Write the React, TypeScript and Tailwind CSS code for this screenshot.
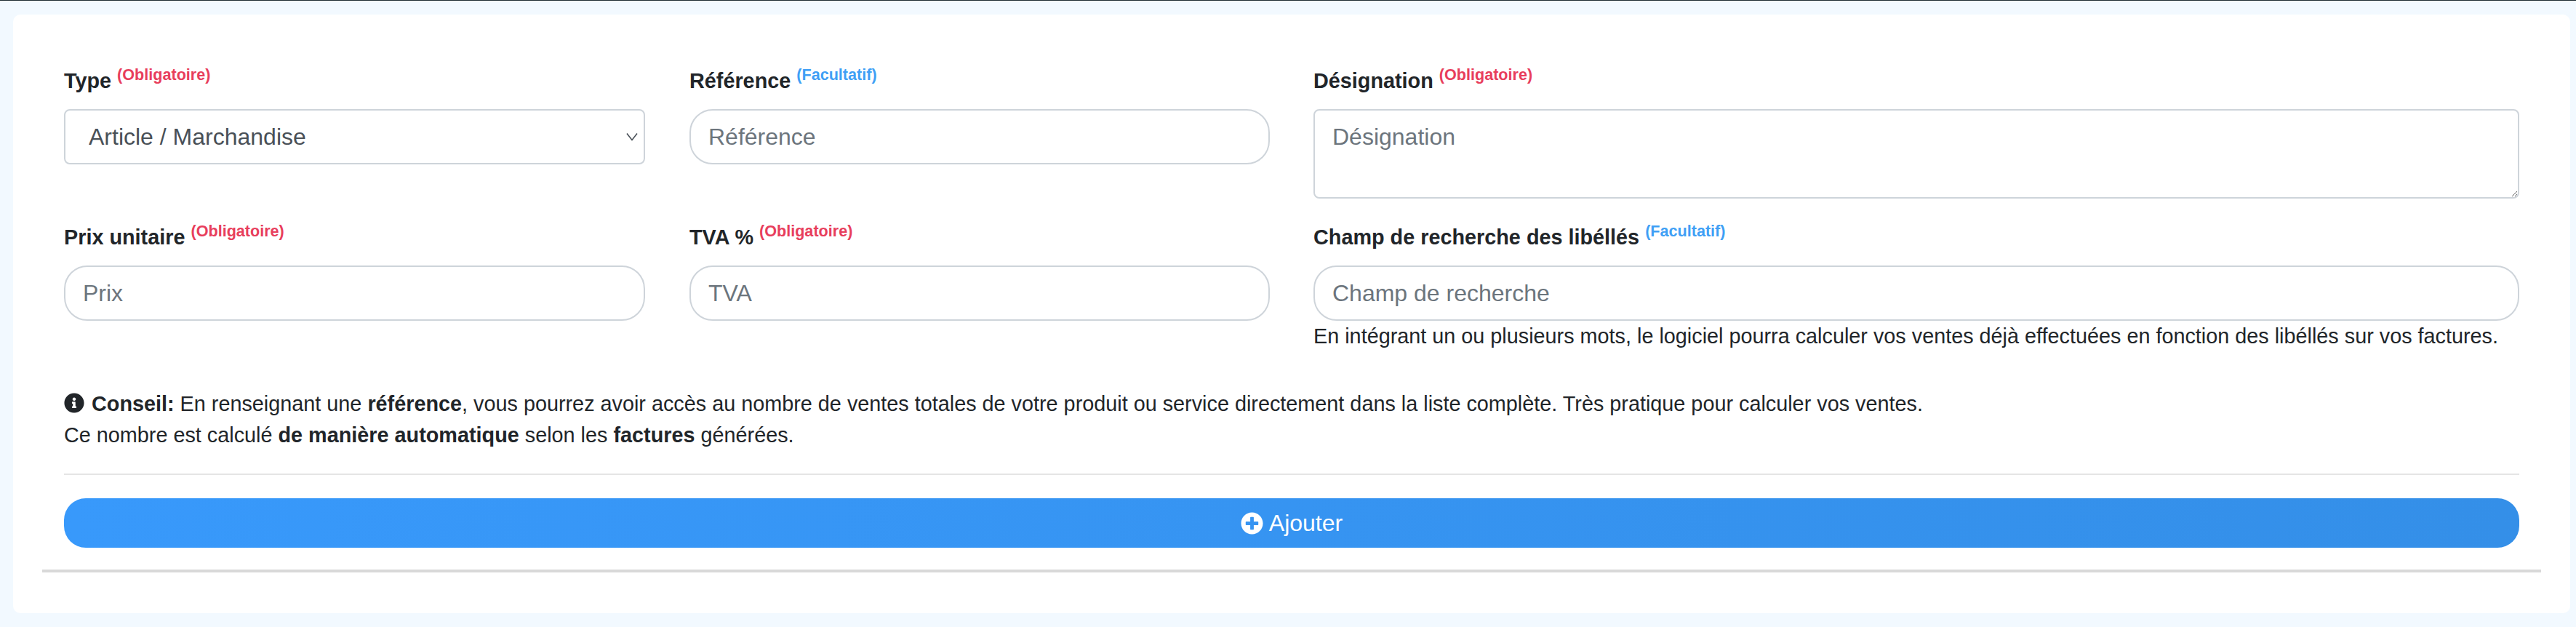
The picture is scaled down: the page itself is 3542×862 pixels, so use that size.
import { FaInfoCircle, FaPlusCircle } from 'react-icons/fa'

function Req() {
  return <sup className="text-[21.6px] font-bold text-[#e83e5c]">(Obligatoire)</sup>
}

function Opt() {
  return <sup className="text-[21.6px] font-bold text-[#3f9ff5]">(Facultatif)</sup>
}

const inputCls =
  'block h-[76px] w-full rounded-[32px] border-2 border-[#ced4da] bg-white px-[24px] text-[32px] text-[#495057] placeholder:text-[#6c757d] outline-none'

export default function App() {
  return (
    <div className="h-[862px] w-[3542px] overflow-hidden border-t border-[#1f2d33] bg-[#f2f9ff] pt-[19px] pl-[18px] font-['Liberation_Sans',Arial,sans-serif] text-[28.8px] leading-[43px] text-[#212529]">
      <div className="h-[823px] w-[3516px] rounded-[10px] bg-white px-[40px] pt-[70px]">
        <div className="px-[30px]">
          <div className="grid grid-cols-[860px_858px_1658px] gap-y-[32px]">
            <div className="pr-[61px]">
              <label className="mb-[17px] block font-bold">
                Type <Req />
              </label>
              <div className="relative">
                <select className="block h-[76px] w-full appearance-none rounded-[8px] border-2 border-[#ced4da] bg-white px-[32px] text-[32px] text-[#495057] outline-none">
                  <option>Article / Marchandise</option>
                </select>
                <svg className="absolute top-[32px] right-[10px] h-[12px] w-[16px]" viewBox="0 0 16 12" fill="none" stroke="#495057" strokeWidth="1.6">
                  <path d="M1 1.5 8 10.5 15 1.5" />
                </svg>
              </div>
            </div>
            <div className="pr-[60px]">
              <label className="mb-[17px] block font-bold">
                Référence <Opt />
              </label>
              <input className={inputCls} placeholder="Référence" />
            </div>
            <div>
              <label className="mb-[17px] block font-bold">
                Désignation <Req />
              </label>
              <textarea
                className="block h-[123px] w-full rounded-[8px] border-2 border-[#ced4da] bg-white px-[24px] py-[12px] text-[32px] leading-[48px] text-[#495057] placeholder:text-[#6c757d] outline-none"
                placeholder="Désignation"
              />
            </div>
            <div className="pr-[61px]">
              <label className="mb-[17px] block font-bold">
                Prix unitaire <Req />
              </label>
              <input className={inputCls} placeholder="Prix" />
            </div>
            <div className="pr-[60px]">
              <label className="mb-[17px] block font-bold">
                TVA % <Req />
              </label>
              <input className={inputCls} placeholder="TVA" />
            </div>
            <div>
              <label className="mb-[17px] block font-bold">
                Champ de recherche des libéllés <Opt />
              </label>
              <input className={inputCls} placeholder="Champ de recherche" />
              <p>En intégrant un ou plusieurs mots, le logiciel pourra calculer vos ventes déjà effectuées en fonction des libéllés sur vos factures.</p>
            </div>
          </div>
          <div className="mt-[50px]">
            <p>
              <FaInfoCircle className="mr-[10px] inline-block align-[-3px] text-[28px]" />
              <b>Conseil:</b> En renseignant une <b>référence</b>, vous pourrez avoir accès au nombre de ventes totales de votre produit ou service directement dans la liste complète. Très pratique pour calculer vos ventes.
            </p>
            <p>
              Ce nombre est calculé <b>de manière automatique</b> selon les <b>factures</b> générées.
            </p>
          </div>
          <hr className="mt-[31px] border-t-2 border-[#e5e5e5]" />
          <button className="mt-[32px] flex h-[68px] w-full items-center justify-center gap-[8px] rounded-[30px] bg-linear-to-r from-[#3899fb] to-[#348fe8] text-[32px] text-white">
            <FaPlusCircle className="text-[31px]" />
            Ajouter
          </button>
        </div>
        <hr className="mt-[30px] border-t-4 border-[#d9d9d9]" />
      </div>
    </div>
  )
}
